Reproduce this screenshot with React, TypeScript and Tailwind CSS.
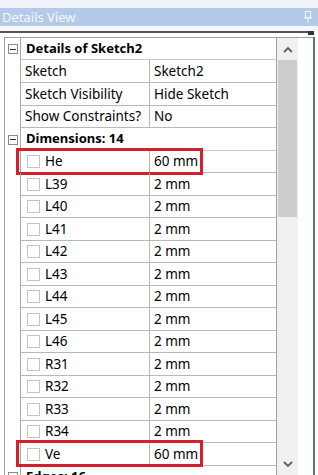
import React from "react";

const font = { fontFamily: '"Noto Sans", "Open Sans", sans-serif' };

function Minus() {
  return (
    <div className="w-[10px] h-[10px] border border-[#8a8a8a] bg-white flex items-center justify-center">
      <div className="w-[6px] h-[1px] bg-[#333]" />
    </div>
  );
}

function Check() {
  return <div className="w-[13px] h-[13px] border border-[#c4c4c4] bg-white shrink-0" />;
}

type Row =
  | { kind: "group"; label: string }
  | { kind: "prop"; name: string; value: string }
  | { kind: "dim"; name: string; value: string; boxed?: boolean };

const rows: Row[] = [
  { kind: "group", label: "Details of Sketch2" },
  { kind: "prop", name: "Sketch", value: "Sketch2" },
  { kind: "prop", name: "Sketch Visibility", value: "Hide Sketch" },
  { kind: "prop", name: "Show Constraints?", value: "No" },
  { kind: "group", label: "Dimensions: 14" },
  { kind: "dim", name: "He", value: "60 mm", boxed: true },
  { kind: "dim", name: "L39", value: "2 mm" },
  { kind: "dim", name: "L40", value: "2 mm" },
  { kind: "dim", name: "L41", value: "2 mm" },
  { kind: "dim", name: "L42", value: "2 mm" },
  { kind: "dim", name: "L43", value: "2 mm" },
  { kind: "dim", name: "L44", value: "2 mm" },
  { kind: "dim", name: "L45", value: "2 mm" },
  { kind: "dim", name: "L46", value: "2 mm" },
  { kind: "dim", name: "R31", value: "2 mm" },
  { kind: "dim", name: "R32", value: "2 mm" },
  { kind: "dim", name: "R33", value: "2 mm" },
  { kind: "dim", name: "R34", value: "2 mm" },
  { kind: "dim", name: "Ve", value: "60 mm", boxed: true },
  { kind: "group", label: "Edges: 16" },
];

function TableRow({ row, idx }: { row: Row; idx: number }) {
  const hc =
    idx === 0 ? "h-[22px]" : idx <= 2 ? "h-[23px]" : idx % 2 === 1 ? "h-[22px]" : "h-[23px]";
  if (row.kind === "group") {
    return (
      <div className={`flex ${hc} shrink-0`}>
        <div className="w-[16px] flex items-center justify-center border-r border-[#a8a8a8]">
          <Minus />
        </div>
        <div className="flex-1 flex items-center pl-[5px] border-b border-[#c8c8c8] font-bold text-[13px] text-black">
          {row.label}
        </div>
      </div>
    );
  }
  return (
    <div className={`relative flex ${hc} shrink-0`}>
      <div className="w-[16px] border-r border-[#a8a8a8]" />
      <div className="w-[129px] flex items-center border-b border-r border-[#b8b8b8] text-[13.5px] text-black">
        {row.kind === "dim" ? (
          <div className="flex items-center pl-[6px] gap-[5px]">
            <Check />
            <span>{row.name}</span>
          </div>
        ) : (
          <span className="pl-[4px]">{row.name}</span>
        )}
      </div>
      <div className="flex-1 flex items-center pl-[4px] border-b border-[#b8b8b8] text-[13.5px] text-black">
        {row.value}
      </div>
      {row.kind === "dim" && row.boxed ? (
        <div className="absolute left-[11px] top-[-3px] w-[187px] h-[27px] border-[3px] border-[#d4202c]" />
      ) : null}
    </div>
  );
}

export default function App() {
  return (
    <div className="w-[318px] h-[475px] bg-white overflow-hidden relative" style={font}>
      {/* title bar */}
      <div className="h-[8px] bg-[#eef3fa]" />
      <div className="h-[18px] bg-[#b3cbe8] flex items-center justify-between pl-[2px] pr-[6px]">
        <span className="text-[13px] text-[#f4f8fd] leading-none">Details View</span>
        <svg width="8" height="12" viewBox="0 0 8 12">
          <rect x="1.5" y="0.5" width="5" height="6" fill="none" stroke="#f4f8fd" />
          <line x1="0" y1="7" x2="8" y2="7" stroke="#f4f8fd" />
          <line x1="4" y1="7" x2="4" y2="12" stroke="#f4f8fd" />
        </svg>
      </div>
      <div className="h-[5px] bg-[#f5f7fa]" />
      <div className="h-[2px] bg-[#555] mr-[4px] flex justify-end">
        <div className="w-[6px] h-[4px] bg-[#333]" />
      </div>
      <div className="h-[4px] bg-white" />
      {/* body */}
      <div className="flex h-[438px]">
        <div className="w-[4px]" />
        <div className="flex-1 flex border-l border-t border-[#a0a0a0] overflow-hidden">
          <div className="w-[272px] flex flex-col border-r border-[#a0a0a0] overflow-hidden">
            {rows.map((r, i) => (
              <TableRow key={i} row={r} idx={i} />
            ))}
          </div>
          {/* scrollbar */}
          <div className="w-[21px] bg-[#f0f0f0] flex flex-col">
            <div className="h-[22px] flex items-center justify-center">
              <svg width="10" height="7" viewBox="0 0 10 7">
                <path d="M1 6 L5 2 L9 6" fill="none" stroke="#606060" strokeWidth="1.8" />
              </svg>
            </div>
            <div className="h-[157px] mx-[1px] bg-[#cdcdcd]" />
            <div className="flex-1" />
            <div className="h-[22px] flex items-center justify-center">
              <svg width="10" height="7" viewBox="0 0 10 7">
                <path d="M1 1 L5 5 L9 1" fill="none" stroke="#606060" strokeWidth="1.8" />
              </svg>
            </div>
          </div>
        </div>
        <div className="w-[2px] bg-[#5d6f8c]" />
        <div className="w-[3px]" />
      </div>
    </div>
  );
}
